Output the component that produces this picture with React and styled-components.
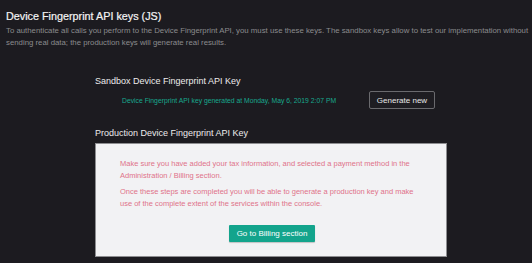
import React from 'react';
import styled, { createGlobalStyle } from 'styled-components';

const GlobalStyle = createGlobalStyle`
  html, body {
    margin: 0;
    padding: 0;
    background: #1c1b20;
  }
  body {
    font-family: "Liberation Sans", Arial, sans-serif;
  }
`;

const Page = styled.div`
  width: 532px;
  height: 263px;
  box-sizing: border-box;
  padding: 10px 2px 0 6px;
  background: #1c1b20;
  overflow: hidden;
`;

const Title = styled.h1`
  margin: 0;
  font-size: 10.8px;
  line-height: 12px;
  font-weight: normal;
  color: #f4f4f4;
  -webkit-text-stroke: 0.2px #f4f4f4;
`;

const Intro = styled.p`
  margin: 3px 0 0;
  font-size: 7.8px;
  line-height: 12px;
  color: #8b8b8e;
  white-space: nowrap;
`;

const Section = styled.section`
  width: 352px;
  margin: ${(p) => p.$top}px 0 0 89px;
`;

const SectionTitle = styled.h2`
  margin: 0;
  font-size: 9px;
  line-height: 12px;
  font-weight: normal;
  color: #ececec;
`;

const SandboxRow = styled.div`
  display: flex;
  align-items: center;
  justify-content: space-between;
  padding: 4px 12px 0 27px;
`;

const KeyInfo = styled.span`
  font-size: 6.8px;
  color: #18a88e;
`;

const OutlineButton = styled.button`
  height: 18px;
  width: 66px;
  padding: 0;
  background: #1e1d22;
  border: 1px solid #6a6a6e;
  border-radius: 2px;
  color: #e8e8e8;
  font-family: inherit;
  font-size: 8px;
`;

const Card = styled.div`
  margin-top: 4px;
  height: 114px;
  box-sizing: border-box;
  padding: 14px 22px 0 24px;
  background: #f2f2f4;
  border: 1px solid #8d8d90;
  display: flex;
  flex-direction: column;
`;

const Notice = styled.p`
  margin: 0 0 4px;
  font-size: 7.5px;
  line-height: 12px;
  color: #e0728a;
`;

const PrimaryButton = styled.button`
  align-self: center;
  margin-top: 11px;
  height: 17px;
  width: 86px;
  padding: 0;
  background: #13a48c;
  border: none;
  border-radius: 1px;
  color: #ffffff;
  font-family: inherit;
  font-size: 8px;
  box-shadow: 0 1px 1px rgba(0, 0, 0, 0.2);
`;

export default function App() {
  return (
    <>
      <GlobalStyle />
      <Page>
        <Title>Device Fingerprint API keys (JS)</Title>
        <Intro>
          To authenticate all calls you perform to the Device Fingerprint API, you must use these keys. The sandbox keys allow to test our implementation without
          <br />
          sending real data; the production keys will generate real results.
        </Intro>
        <Section $top={26}>
          <SectionTitle>Sandbox Device Fingerprint API Key</SectionTitle>
          <SandboxRow>
            <KeyInfo>Device Fingerprint API key generated at Monday, May 6, 2019 2:07 PM</KeyInfo>
            <OutlineButton>Generate new</OutlineButton>
          </SandboxRow>
        </Section>
        <Section $top={18}>
          <SectionTitle>Production Device Fingerprint API Key</SectionTitle>
          <Card>
            <Notice>
              Make sure you have added your tax information, and selected a payment method in the Administration / Billing section.
            </Notice>
            <Notice>
              Once these steps are completed you will be able to generate a production key and make use of the complete extent of the services within the console.
            </Notice>
            <PrimaryButton>Go to Billing section</PrimaryButton>
          </Card>
        </Section>
      </Page>
    </>
  );
}
